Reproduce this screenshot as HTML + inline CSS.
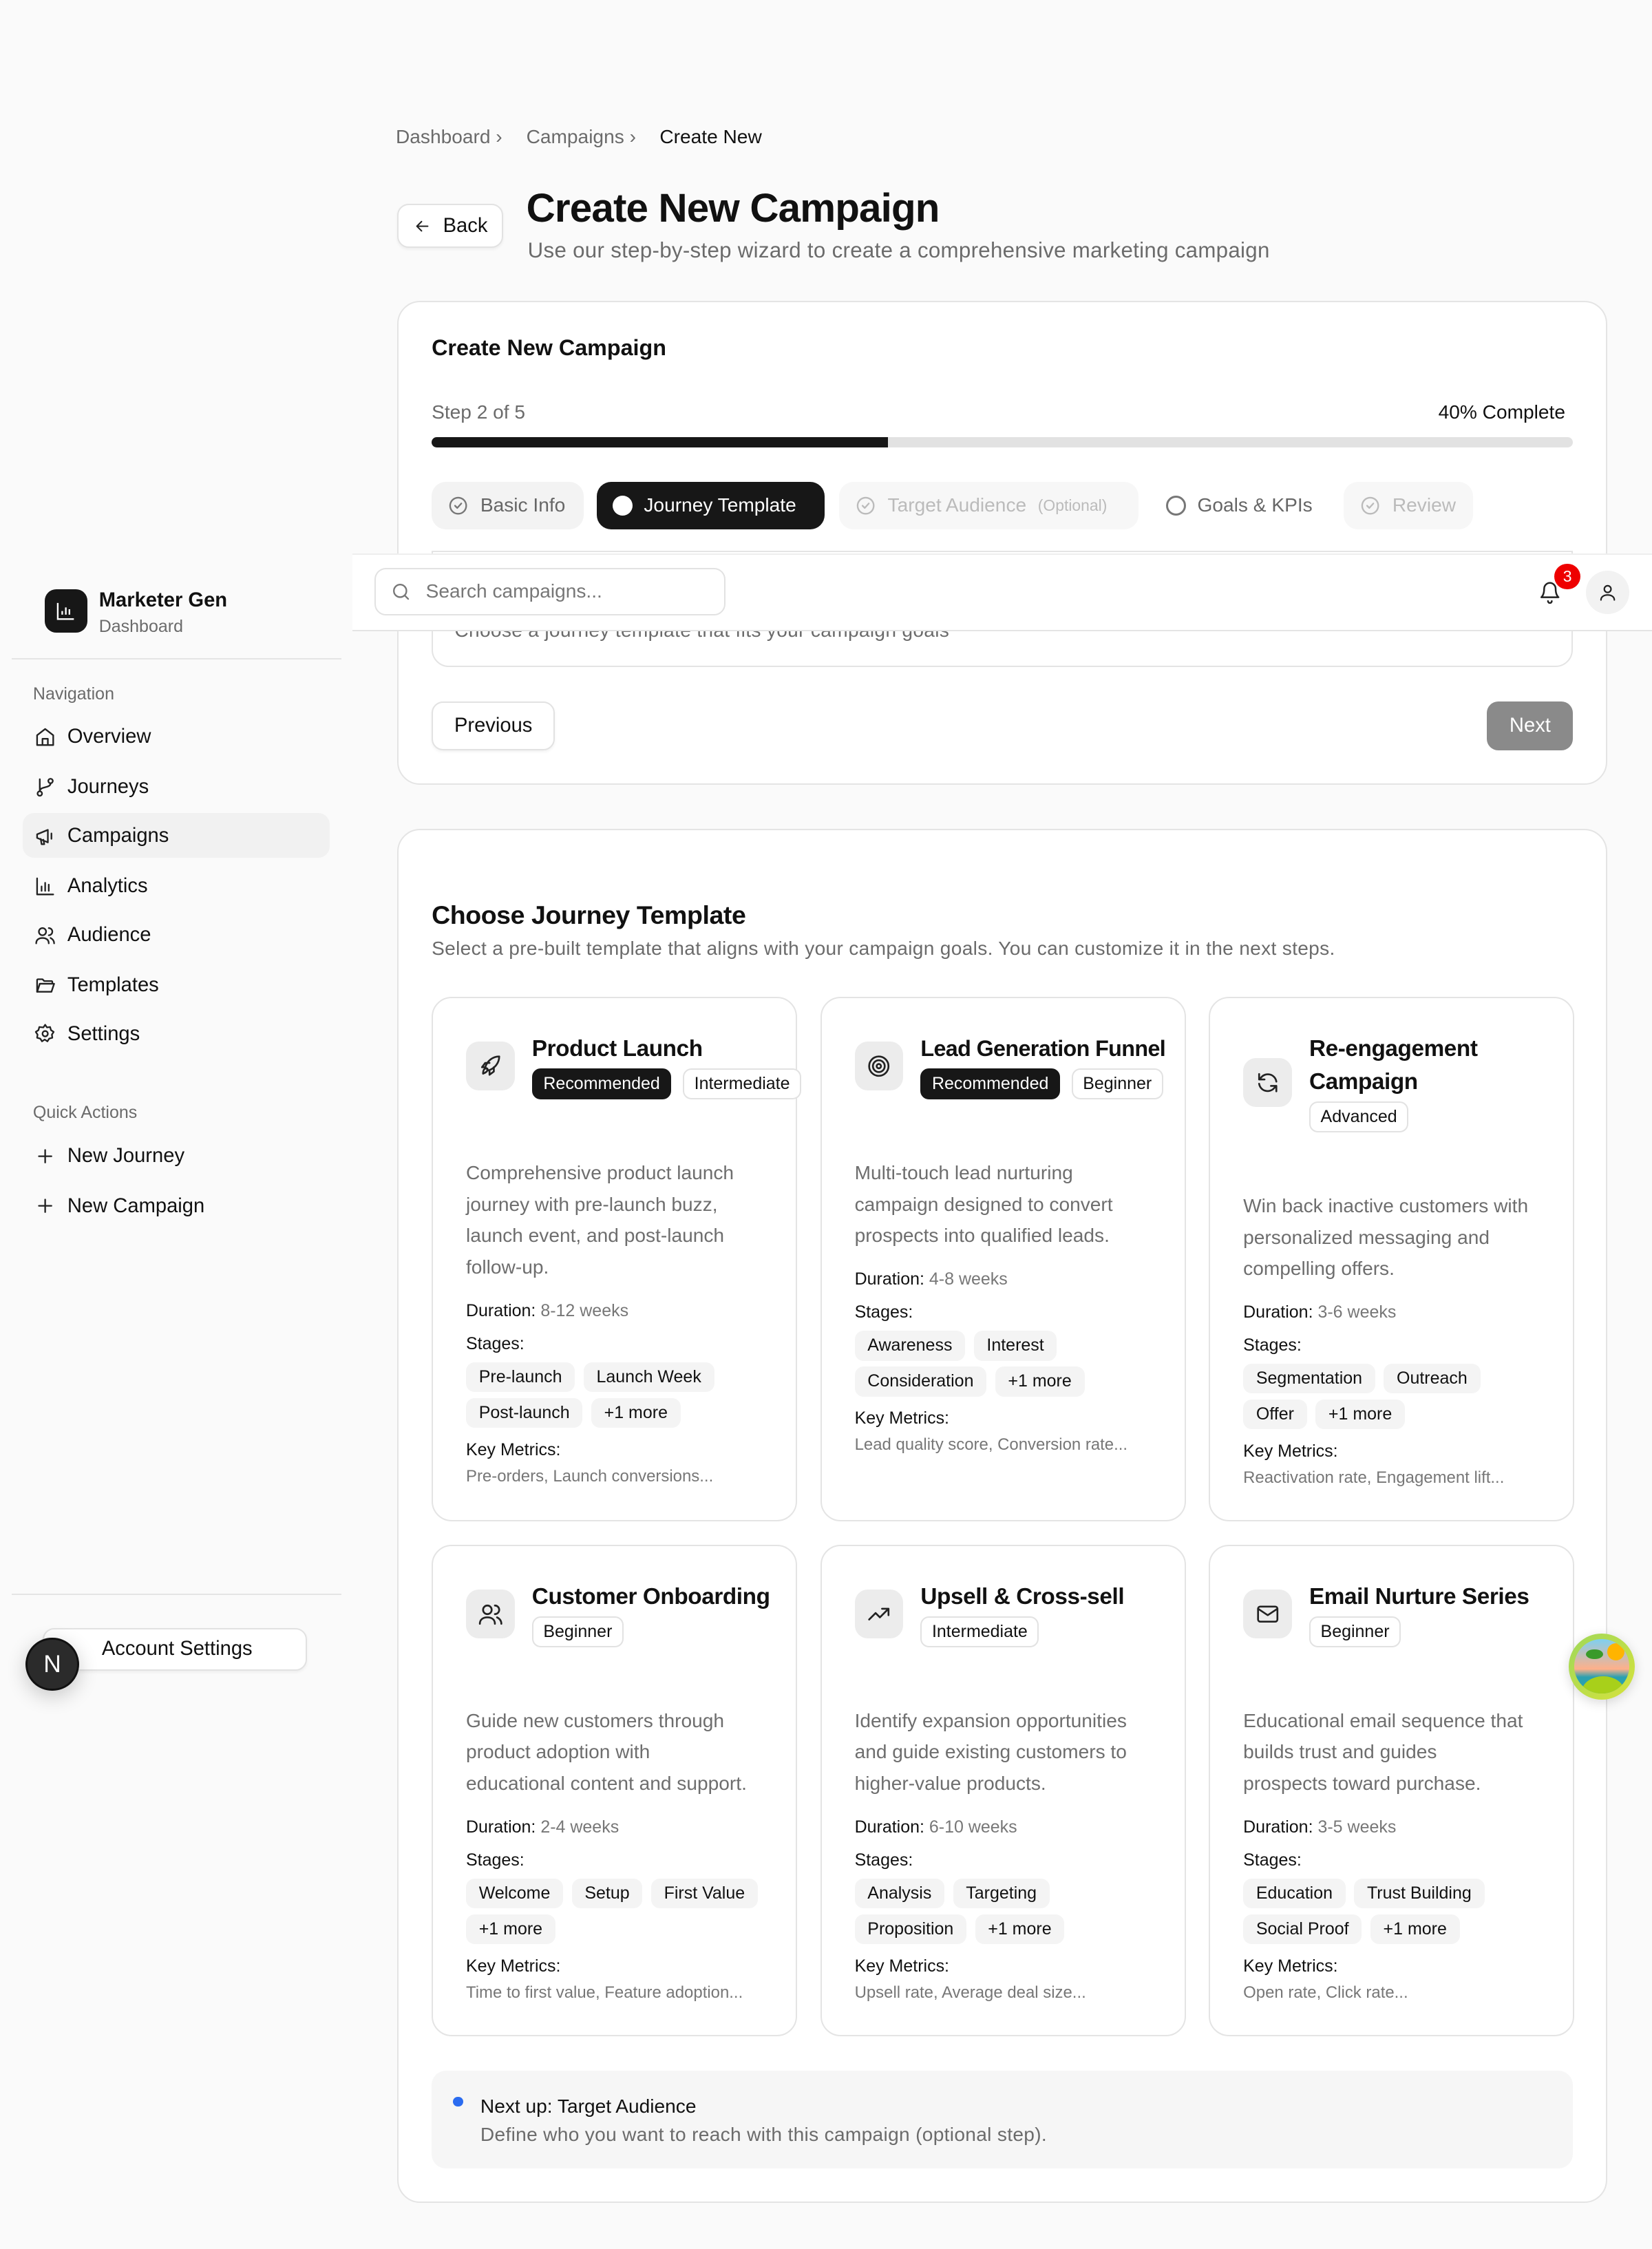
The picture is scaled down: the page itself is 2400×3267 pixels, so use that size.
<!DOCTYPE html>
<html><head><meta charset="utf-8"><style>
html{zoom:2.08333}
*{box-sizing:border-box;margin:0;padding:0}
body{width:1152px;height:1568px;background:#fafafa;font-family:"Liberation Sans",sans-serif;color:#111;position:relative;overflow:hidden}
.a{position:absolute;white-space:nowrap}
svg.i{width:15px;height:15px;fill:none;stroke:#222;stroke-width:1.8;stroke-linecap:round;stroke-linejoin:round;flex:none}
.nav{position:absolute;left:24px;font-size:14px;display:flex;align-items:center;gap:8px;height:20px}
.gray{color:#6b6b6b}
.card{position:absolute;background:#fff;border:1px solid #e4e4e4;border-radius:16px}
.btn{position:absolute;background:#fff;border:1px solid #e2e2e2;border-radius:8px;font-size:14px;display:flex;align-items:center;justify-content:center;box-shadow:0 1px 2px rgba(0,0,0,.05);white-space:nowrap}
.tab{position:absolute;top:336px;height:33px;border-radius:10px;font-size:13.5px;display:flex;align-items:center;padding:0 11px;gap:8px;white-space:nowrap}
.tc{position:absolute;width:255px;background:#fff;border:1px solid #e4e4e4;border-radius:14px;padding:24px 23px}
.hd{display:flex;align-items:center;gap:12px}
.ib{width:34px;height:34px;background:#ececec;border-radius:9px;flex:none;display:flex;align-items:center;justify-content:center}
.ib svg.i{width:18px;height:18px;stroke-width:1.7}
.tt{font-size:16px;font-weight:600;line-height:23px;white-space:nowrap;letter-spacing:-.2px}
.bd{display:flex;gap:8px;margin-top:2px}
.bg{font-size:12px;border:1px solid #e2e2e2;border-radius:6px;padding:3px 7px;white-space:nowrap;background:#fff}
.bg.k{background:#171717;color:#fff;border-color:#171717}
.ds{margin-top:40px;font-size:13.5px;line-height:22px;color:#6e6e6e;white-space:nowrap}
.lb{font-size:12px;margin-top:8px;line-height:15px}
.lb span{color:#777}
.ch{display:flex;flex-wrap:wrap;gap:4px 6px;margin-top:5px}
.ch span{font-size:12px;line-height:15px;background:#f4f4f4;border-radius:6px;padding:3px 9px}
.km{font-size:11.5px;color:#777;margin-top:4px}
</style></head><body>

<!-- sidebar -->
<div class="a" style="left:31px;top:411px;width:30px;height:30px;background:#171717;border-radius:8px;display:flex;align-items:center;justify-content:center"><svg viewBox="0 0 24 24" style="width:15px;height:15px;fill:none;stroke:#fff;stroke-width:1.8"><path d="M3 3v18h18M8 16v-4M12 16V8M16 16v-6"/></svg></div>
<div class="a" style="left:69px;top:411px;font-size:14px;font-weight:600">Marketer Gen</div>
<div class="a gray" style="left:69px;top:430px;font-size:12px">Dashboard</div>
<div class="a" style="left:8px;top:459px;width:230px;height:1px;background:#e4e4e4"></div>
<div class="a gray" style="left:23px;top:477px;font-size:12px">Navigation</div>
<div class="a" style="left:16px;top:567px;width:214px;height:31px;background:#f1f1f1;border-radius:8px"></div>
<div class="nav" style="top:504px"><svg class="i" viewBox="0 0 24 24"><path d="M3 10l9-7 9 7v11H3z"/><path d="M9 21v-7h6v7"/></svg>Overview</div>
<div class="nav" style="top:539px"><svg class="i" viewBox="0 0 24 24"><circle cx="6" cy="19" r="2.5"/><circle cx="18" cy="5" r="2.5"/><path d="M6 3v13.5M18 7.5c0 6-12 3-12 9"/></svg>Journeys</div>
<div class="nav" style="top:573px"><svg class="i" viewBox="0 0 24 24"><path d="M3 10v4l12 5V5L3 10zM7 15l1 6h3l-1-5"/><path d="M19 9v6"/></svg>Campaigns</div>
<div class="nav" style="top:608px"><svg class="i" viewBox="0 0 24 24"><path d="M3 3v18h18M8 17v-5M12 17V8M16 17v-7"/></svg>Analytics</div>
<div class="nav" style="top:642px"><svg class="i" viewBox="0 0 24 24"><circle cx="9" cy="8" r="4"/><path d="M2 21c0-4 3-6 7-6s7 2 7 6M16 4a4 4 0 010 8M22 21c0-3-2-5-4-6"/></svg>Audience</div>
<div class="nav" style="top:677px"><svg class="i" viewBox="0 0 24 24"><path d="M3 6a1 1 0 011-1h5l2 2h8a1 1 0 011 1v2H6l-3 9z"/><path d="M3 19l3-9h16l-3 9z"/></svg>Templates</div>
<div class="nav" style="top:711px"><svg class="i" viewBox="0 0 24 24"><circle cx="12" cy="12" r="3"/><path d="M12 2l2 3 3.5-.5 1 3.5 3 2-2 3 .5 3.5-3.5 1-2 3-3-2-3 2-2-3-3.5-1 .5-3.5-2-3 3-2 1-3.5L10 5z"/></svg>Settings</div>
<div class="a gray" style="left:23px;top:769px;font-size:12px">Quick Actions</div>
<div class="nav" style="top:796px"><svg class="i" viewBox="0 0 24 24"><path d="M12 5v14M5 12h14"/></svg>New Journey</div>
<div class="nav" style="top:831px"><svg class="i" viewBox="0 0 24 24"><path d="M12 5v14M5 12h14"/></svg>New Campaign</div>
<div class="a" style="left:8px;top:1111px;width:230px;height:1px;background:#e4e4e4"></div>
<div class="btn" style="left:30px;top:1135px;width:184px;height:30px;justify-content:flex-start;padding-left:40px;font-size:14px">Account Settings</div>
<div class="a" style="left:18px;top:1142px;width:37px;height:37px;border-radius:50%;background:#2b2b2b;border:1.5px solid #111;color:#fff;font-size:17px;display:flex;align-items:center;justify-content:center;box-shadow:0 4px 14px rgba(0,0,0,.2)">N</div>

<!-- breadcrumb / title -->
<div class="a gray" style="left:276px;top:88px;font-size:13.5px">Dashboard ›</div>
<div class="a gray" style="left:367px;top:88px;font-size:13.5px">Campaigns ›</div>
<div class="a" style="left:460px;top:88px;font-size:13.5px">Create New</div>
<div class="btn" style="left:277px;top:142px;width:74px;height:31px;gap:8px"><svg class="i" viewBox="0 0 24 24" style="width:13px"><path d="M19 12H5M11 6l-6 6 6 6"/></svg>Back</div>
<div class="a" style="left:367px;top:129px;font-size:28px;font-weight:700;letter-spacing:-.4px">Create New Campaign</div>
<div class="a gray" style="left:368px;top:166px;font-size:15px;letter-spacing:.15px">Use our step-by-step wizard to create a comprehensive marketing campaign</div>

<!-- card 1 -->
<div class="card" style="left:277px;top:210px;width:844px;height:337px"></div>
<div class="a" style="left:301px;top:234px;font-size:15.5px;font-weight:600">Create New Campaign</div>
<div class="a gray" style="left:301px;top:280px;font-size:13.5px">Step 2 of 5</div>
<div class="a" style="left:1003px;top:280px;font-size:13.5px;font-weight:500">40% Complete</div>
<div class="a" style="left:301px;top:305px;width:796px;height:7px;background:#e2e2e2;border-radius:4px"><div style="width:318px;height:7px;background:#171717;border-radius:4px 0 0 4px"></div></div>
<div class="tab" style="left:301px;width:106px;background:#f3f3f3;color:#666"><svg class="i" viewBox="0 0 24 24" style="stroke:#777"><circle cx="12" cy="12" r="9"/><path d="M8.5 12l2.5 2.5 4.5-5"/></svg>Basic Info</div>
<div class="tab" style="left:416px;width:159px;background:#171717;color:#fff"><span style="width:14px;height:14px;border-radius:50%;background:#fff;display:inline-block"></span>Journey Template</div>
<div class="tab" style="left:585px;width:209px;background:#f7f7f7;color:#bbb"><svg class="i" viewBox="0 0 24 24" style="stroke:#bbb"><circle cx="12" cy="12" r="9"/><path d="M8.5 12l2.5 2.5 4.5-5"/></svg>Target Audience <span style="font-size:11px">(Optional)</span></div>
<div class="tab" style="left:802px;width:126px;color:#666"><span style="width:14px;height:14px;border-radius:50%;border:1.6px solid #777;display:inline-block"></span>Goals &amp; KPIs</div>
<div class="tab" style="left:937px;width:90px;background:#f7f7f7;color:#bbb"><svg class="i" viewBox="0 0 24 24" style="stroke:#bbb"><circle cx="12" cy="12" r="9"/><path d="M8.5 12l2.5 2.5 4.5-5"/></svg>Review</div>
<div class="a" style="left:301px;top:384px;width:796px;height:81px;border:1px solid #e4e4e4;border-radius:0 0 12px 12px;background:#fff"></div>
<div class="a gray" style="left:317px;top:432px;font-size:13.5px;letter-spacing:.15px">Choose a journey template that fits your campaign goals</div>
<div class="btn" style="left:301px;top:489px;width:86px;height:34px">Previous</div>
<div class="a" style="left:1037px;top:489px;width:60px;height:34px;background:#8a8a8a;border-radius:8px;color:#fff;font-size:14px;display:flex;align-items:center;justify-content:center">Next</div>

<!-- header overlay -->
<div class="a" style="left:246px;top:386px;width:906px;height:54px;background:#fff;border-bottom:1px solid #e4e4e4;border-top:1px solid #eee"></div>
<div class="a" style="left:261px;top:396px;width:245px;height:33px;border:1px solid #e2e2e2;border-radius:8px;background:#fff;display:flex;align-items:center;padding-left:10px;gap:10px;font-size:13.5px;color:#777"><svg class="i" viewBox="0 0 24 24" style="stroke:#777"><circle cx="11" cy="11" r="7"/><path d="M20 20l-4-4"/></svg>Search campaigns...</div>
<svg class="i a" viewBox="0 0 24 24" style="left:1073px;top:405px;width:16px;height:16px"><path d="M6 8a6 6 0 0112 0c0 7 3 9 3 9H3s3-2 3-9M10 21a2 2 0 004 0"/></svg>
<div class="a" style="left:1084px;top:393px;width:18px;height:18px;border-radius:50%;background:#e00;color:#fff;font-size:11px;display:flex;align-items:center;justify-content:center">3</div>
<div class="a" style="left:1106px;top:398px;width:30px;height:30px;border-radius:50%;background:#f2f2f2;display:flex;align-items:center;justify-content:center"><svg class="i" viewBox="0 0 24 24" style="width:14px"><circle cx="12" cy="8" r="4"/><path d="M4 21c0-4 4-6 8-6s8 2 8 6"/></svg></div>

<!-- card 2 -->
<div class="card" style="left:277px;top:578px;width:844px;height:958px"></div>
<div class="a" style="left:301px;top:628px;font-size:18px;font-weight:600;letter-spacing:-.2px">Choose Journey Template</div>
<div class="a gray" style="left:301px;top:654px;font-size:13.5px;letter-spacing:.15px">Select a pre-built template that aligns with your campaign goals. You can customize it in the next steps.</div>

<div class="tc" style="left:301px;top:695px;height:366px">
<div class="hd"><div class="ib"><svg class="i" viewBox="0 0 24 24"><path d="M5 19c0-3 1-5 3-5s2 3-3 5zM9 15l-2-2c2-6 7-10 13-10 0 6-4 11-10 13z"/><path d="M7 13H4l3-4h4M11 17v3l4-3v-4"/></svg></div><div><div class="tt">Product Launch</div><div class="bd"><span class="bg k">Recommended</span><span class="bg">Intermediate</span></div></div></div>
<div class="ds">Comprehensive product launch<br>journey with pre-launch buzz,<br>launch event, and post-launch<br>follow-up.</div>
<div class="lb" style="margin-top:12px">Duration: <span>8-12 weeks</span></div>
<div class="lb">Stages:</div>
<div class="ch"><span>Pre-launch</span><span>Launch Week</span><span>Post-launch</span><span>+1 more</span></div>
<div class="lb">Key Metrics:</div><div class="km">Pre-orders, Launch conversions...</div></div>

<div class="tc" style="left:572px;top:695px;height:366px">
<div class="hd"><div class="ib"><svg class="i" viewBox="0 0 24 24"><circle cx="12" cy="12" r="9"/><circle cx="12" cy="12" r="5.5"/><circle cx="12" cy="12" r="2"/></svg></div><div><div class="tt" style="font-size:15.5px;letter-spacing:-.3px">Lead Generation Funnel</div><div class="bd"><span class="bg k">Recommended</span><span class="bg">Beginner</span></div></div></div>
<div class="ds">Multi-touch lead nurturing<br>campaign designed to convert<br>prospects into qualified leads.</div>
<div class="lb" style="margin-top:12px">Duration: <span>4-8 weeks</span></div>
<div class="lb">Stages:</div>
<div class="ch"><span>Awareness</span><span>Interest</span><span>Consideration</span><span>+1 more</span></div>
<div class="lb">Key Metrics:</div><div class="km">Lead quality score, Conversion rate...</div></div>

<div class="tc" style="left:843px;top:695px;height:366px">
<div class="hd"><div class="ib"><svg class="i" viewBox="0 0 24 24"><path d="M20 11a8 8 0 00-14-4L4 9M4 13a8 8 0 0014 4l2-2M4 4v5h5M20 20v-5h-5"/></svg></div><div><div class="tt">Re-engagement<br>Campaign</div><div class="bd"><span class="bg">Advanced</span></div></div></div>
<div class="ds">Win back inactive customers with<br>personalized messaging and<br>compelling offers.</div>
<div class="lb" style="margin-top:12px">Duration: <span>3-6 weeks</span></div>
<div class="lb">Stages:</div>
<div class="ch"><span>Segmentation</span><span>Outreach</span><span>Offer</span><span>+1 more</span></div>
<div class="lb">Key Metrics:</div><div class="km">Reactivation rate, Engagement lift...</div></div>

<div class="tc" style="left:301px;top:1077px;height:343px">
<div class="hd"><div class="ib"><svg class="i" viewBox="0 0 24 24"><circle cx="9" cy="8" r="4"/><path d="M2 21c0-4 3-6 7-6s7 2 7 6M16 4a4 4 0 010 8M22 21c0-3-2-5-4-6"/></svg></div><div><div class="tt">Customer Onboarding</div><div class="bd"><span class="bg">Beginner</span></div></div></div>
<div class="ds">Guide new customers through<br>product adoption with<br>educational content and support.</div>
<div class="lb" style="margin-top:12px">Duration: <span>2-4 weeks</span></div>
<div class="lb">Stages:</div>
<div class="ch"><span>Welcome</span><span>Setup</span><span>First Value</span><span>+1 more</span></div>
<div class="lb">Key Metrics:</div><div class="km">Time to first value, Feature adoption...</div></div>

<div class="tc" style="left:572px;top:1077px;height:343px">
<div class="hd"><div class="ib"><svg class="i" viewBox="0 0 24 24"><path d="M3 17l6-6 4 4 8-8M15 7h6v6"/></svg></div><div><div class="tt">Upsell &amp; Cross-sell</div><div class="bd"><span class="bg">Intermediate</span></div></div></div>
<div class="ds">Identify expansion opportunities<br>and guide existing customers to<br>higher-value products.</div>
<div class="lb" style="margin-top:12px">Duration: <span>6-10 weeks</span></div>
<div class="lb">Stages:</div>
<div class="ch"><span>Analysis</span><span>Targeting</span><span>Proposition</span><span>+1 more</span></div>
<div class="lb">Key Metrics:</div><div class="km">Upsell rate, Average deal size...</div></div>

<div class="tc" style="left:843px;top:1077px;height:343px">
<div class="hd"><div class="ib"><svg class="i" viewBox="0 0 24 24"><rect x="3" y="5" width="18" height="14" rx="2"/><path d="M3 7l9 6 9-6"/></svg></div><div><div class="tt">Email Nurture Series</div><div class="bd"><span class="bg">Beginner</span></div></div></div>
<div class="ds">Educational email sequence that<br>builds trust and guides<br>prospects toward purchase.</div>
<div class="lb" style="margin-top:12px">Duration: <span>3-5 weeks</span></div>
<div class="lb">Stages:</div>
<div class="ch"><span>Education</span><span>Trust Building</span><span>Social Proof</span><span>+1 more</span></div>
<div class="lb">Key Metrics:</div><div class="km">Open rate, Click rate...</div></div>

<div class="a" style="left:301px;top:1444px;width:796px;height:68px;background:#f6f6f6;border-radius:10px"></div>
<div class="a" style="left:316px;top:1462px;width:7px;height:7px;border-radius:50%;background:#2b6cf0"></div>
<div class="a" style="left:335px;top:1461px;font-size:13.5px;font-weight:500">Next up: Target Audience</div>
<div class="a gray" style="left:335px;top:1481px;font-size:13.5px;letter-spacing:.15px">Define who you want to reach with this campaign (optional step).</div>

<!-- floating badge -->
<div class="a" style="left:1094px;top:1139px;width:46px;height:46px;border-radius:50%;background:linear-gradient(135deg,#9fd85a,#d6e23c);box-shadow:0 2px 8px rgba(0,0,0,.15);display:flex;align-items:center;justify-content:center"><div style="width:38px;height:38px;border-radius:50%;background:linear-gradient(#7fd0f0,#ffb08a 55%,#2aa0b0 70%);position:relative;overflow:hidden"><div style="position:absolute;right:3px;top:3px;width:12px;height:12px;border-radius:50%;background:#ffb400"></div><div style="position:absolute;left:5px;bottom:-10px;width:30px;height:22px;border-radius:50%;background:#a8d01a"></div><div style="position:absolute;left:8px;top:7px;width:12px;height:7px;border-radius:50%;background:#3a9a2a"></div></div></div>
</body></html>
